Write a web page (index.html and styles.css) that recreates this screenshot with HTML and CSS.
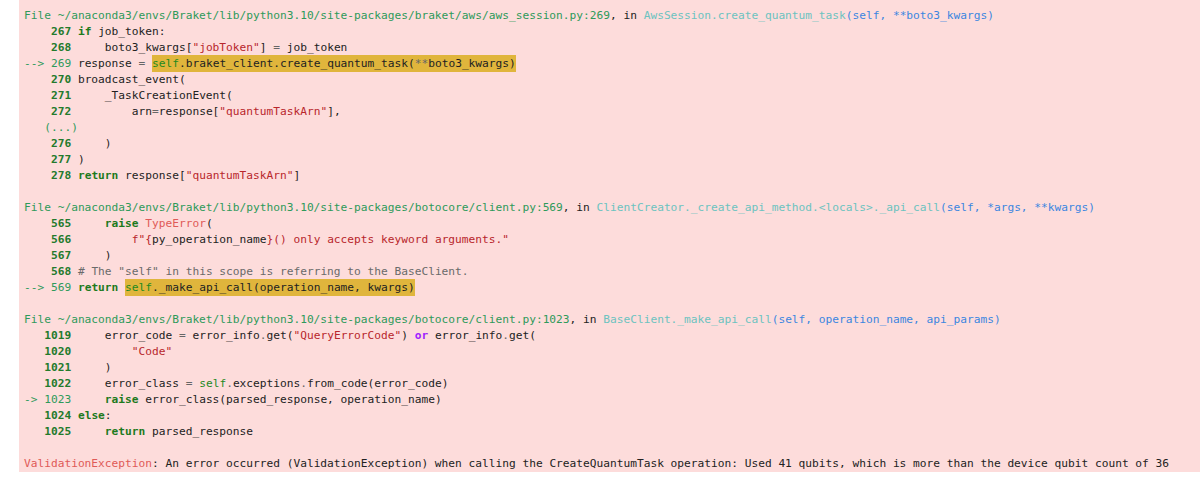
FILE: index.html
```html
<!DOCTYPE html>
<html>
<head>
<meta charset="utf-8">
<link rel="stylesheet" href="styles.css">
</head>
<body>
<div class="out"><pre class="tb"><span class="path">File ~/anaconda3/envs/Braket/lib/python3.10/site-packages/braket/aws/aws_session.py:269</span>, in <span class="fn">AwsSession.create_quantum_task</span><span class="args">(self, **boto3_kwargs)</span>
<span class="ln">    267</span> <span class="kw">if</span> job_token:
<span class="ln">    268</span>     boto3_kwargs[<span class="str">"jobToken"</span>] <span class="op">=</span> job_token
<span class="arrow">--&gt; 269</span> response <span class="op">=</span> <span class="hl"><span class="self">self</span>.braket_client.create_quantum_task(<span class="op">**</span>boto3_kwargs)</span>
<span class="ln">    270</span> broadcast_event(
<span class="ln">    271</span>     _TaskCreationEvent(
<span class="ln">    272</span>         arn<span class="op">=</span>response[<span class="str">"quantumTaskArn"</span>],
<span class="arrow">   (...)</span>
<span class="ln">    276</span>     )
<span class="ln">    277</span> )
<span class="ln">    278</span> <span class="kw">return</span> response[<span class="str">"quantumTaskArn"</span>]

<span class="path">File ~/anaconda3/envs/Braket/lib/python3.10/site-packages/botocore/client.py:569</span>, in <span class="fn">ClientCreator._create_api_method.&lt;locals&gt;._api_call</span><span class="args">(self, *args, **kwargs)</span>
<span class="ln">    565</span>     <span class="kw">raise</span> <span class="exc">TypeError</span>(
<span class="ln">    566</span>         <span class="str">f"{</span>py_operation_name<span class="str">}() only accepts keyword arguments."</span>
<span class="ln">    567</span>     )
<span class="ln">    568</span> <span class="cm"># The "self" in this scope is referring to the BaseClient.</span>
<span class="arrow">--&gt; 569</span> <span class="kw">return</span> <span class="hl"><span class="self">self</span>._make_api_call(operation_name, kwargs)</span>

<span class="path">File ~/anaconda3/envs/Braket/lib/python3.10/site-packages/botocore/client.py:1023</span>, in <span class="fn">BaseClient._make_api_call</span><span class="args">(self, operation_name, api_params)</span>
<span class="ln">   1019</span>     error_code <span class="op">=</span> error_info<span class="op">.</span>get(<span class="str">"QueryErrorCode"</span>) <span class="or">or</span> error_info<span class="op">.</span>get(
<span class="ln">   1020</span>         <span class="str">"Code"</span>
<span class="ln">   1021</span>     )
<span class="ln">   1022</span>     error_class <span class="op">=</span> <span class="self">self</span><span class="op">.</span>exceptions<span class="op">.</span>from_code(error_code)
<span class="arrow">-&gt; 1023</span>     <span class="kw">raise</span> error_class(parsed_response, operation_name)
<span class="ln">   1024</span> <span class="kw">else</span>:
<span class="ln">   1025</span>     <span class="kw">return</span> parsed_response

<span class="exc">ValidationException</span>: An error occurred (ValidationException) when calling the CreateQuantumTask operation: Used 41 qubits, which is more than the device qubit count of 36</pre></div>
</body>
</html>
```

FILE: styles.css
```css
html, body {
  margin: 0;
  padding: 0;
  background: #ffffff;
}

body {
  padding-left: 19px;
  height: 484px;
  overflow: hidden;
}

.out {
  background: #fddcdb;
  padding: 8px 0 0 5px;
  height: 464px;
}

.tb {
  margin: 0;
  font-family: "DejaVu Sans Mono", "Liberation Mono", monospace;
  font-size: 11.2px;
  line-height: 16px;
  color: #222222;
  white-space: pre;
}

.path { color: #2e9a5a; }
.fn { color: #6cc3c0; }
.args { color: #3b86e0; }
.ln { color: #237a2c; font-weight: bold; }
.arrow { color: #2e9a5a; }
.kw { color: #1d7a1d; font-weight: bold; }
.str { color: #b8262b; }
.op { color: #666666; }
.self { color: #1f8a1f; }
.or { color: #a022ff; font-weight: bold; }
.exc { color: #e05a57; }
.cm { color: #6a6a6a; }
.hl {
  background: #e0b53c;
  padding: 2px 0;
}
```
